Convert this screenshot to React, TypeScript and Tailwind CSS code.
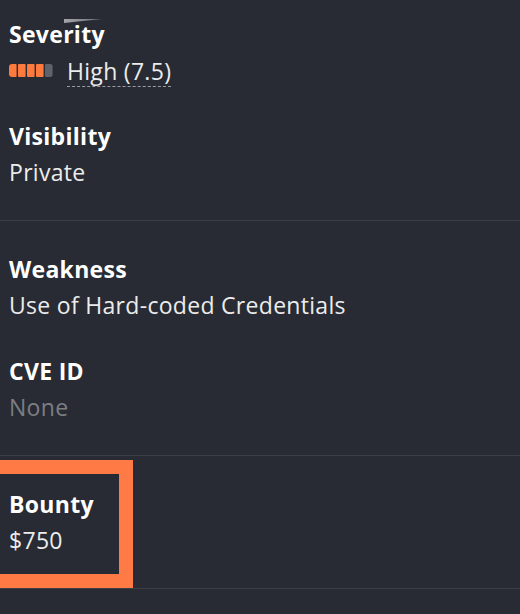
import React from 'react';

function SeverityMeter() {
  // 4 of 5 segments filled
  const segs = [0, 1, 2, 3, 4];
  return (
    <svg width="44" height="13" viewBox="0 0 44 13" className="shrink-0">
      <defs>
        <clipPath id="meter-clip">
          <rect x="0" y="0" width="44" height="13" rx="3" />
        </clipPath>
      </defs>
      <g clipPath="url(#meter-clip)">
        {segs.map((i) => (
          <rect
            key={i}
            x={i * 9}
            y="0"
            width="7.6"
            height="13"
            rx="1"
            fill={i < 4 ? '#ff7a3d' : '#5f626a'}
          />
        ))}
      </g>
    </svg>
  );
}

function Field({ label, children }: { label: string; children: React.ReactNode }) {
  return (
    <div className="flex flex-col tracking-[0.3px]">
      <div className="text-[23px] leading-[36px] font-bold text-white">{label}</div>
      <div className="h-[36px] text-[23px] leading-[36px] text-[#ececec]">{children}</div>
    </div>
  );
}

export default function App() {
  return (
    <div
      className="relative w-[520px] h-[614px] overflow-hidden bg-[#282b33]"
      style={{ fontFamily: '"Open Sans", Lato, sans-serif' }}
    >
      {/* clipped tooltip tail above the first label */}
      <svg width="40" height="6" viewBox="0 0 40 6" className="absolute left-[64px] top-[18px]">
        <defs>
          <linearGradient id="tail" x1="0" x2="1" y1="0" y2="0">
            <stop offset="0" stopColor="#a3a5aa" />
            <stop offset="1" stopColor="#6b6e74" />
          </linearGradient>
        </defs>
        <polygon points="0,1 38,1 0,5" fill="url(#tail)" />
      </svg>

      <section className="flex flex-col gap-[30px] px-[9px] pt-[16px] pb-[30px] border-b border-[#3b3e45]">
        <Field label="Severity">
          <div className="flex h-[36px] items-center gap-[14px]">
            <SeverityMeter />
            <span className="border-b border-dashed border-[#9a9ca1] leading-[30px] mt-[3px]">High (7.5)</span>
          </div>
        </Field>
        <Field label="Visibility">Private</Field>
      </section>

      <section className="flex flex-col gap-[30px] px-[9px] py-[30px] border-b border-[#3b3e45]">
        <Field label="Weakness">Use of Hard-coded Credentials</Field>
        <Field label="CVE ID">
          <span className="text-[#7c7e83]">None</span>
        </Field>
      </section>

      <section className="relative flex flex-col px-[9px] py-[30px] border-b border-[#3b3e45]">
        <Field label="Bounty">$750</Field>
        <div className="absolute left-[-20px] top-[4px] w-[153px] bottom-0 border-[14px] border-[#ff7a45]" />
      </section>
    </div>
  );
}
